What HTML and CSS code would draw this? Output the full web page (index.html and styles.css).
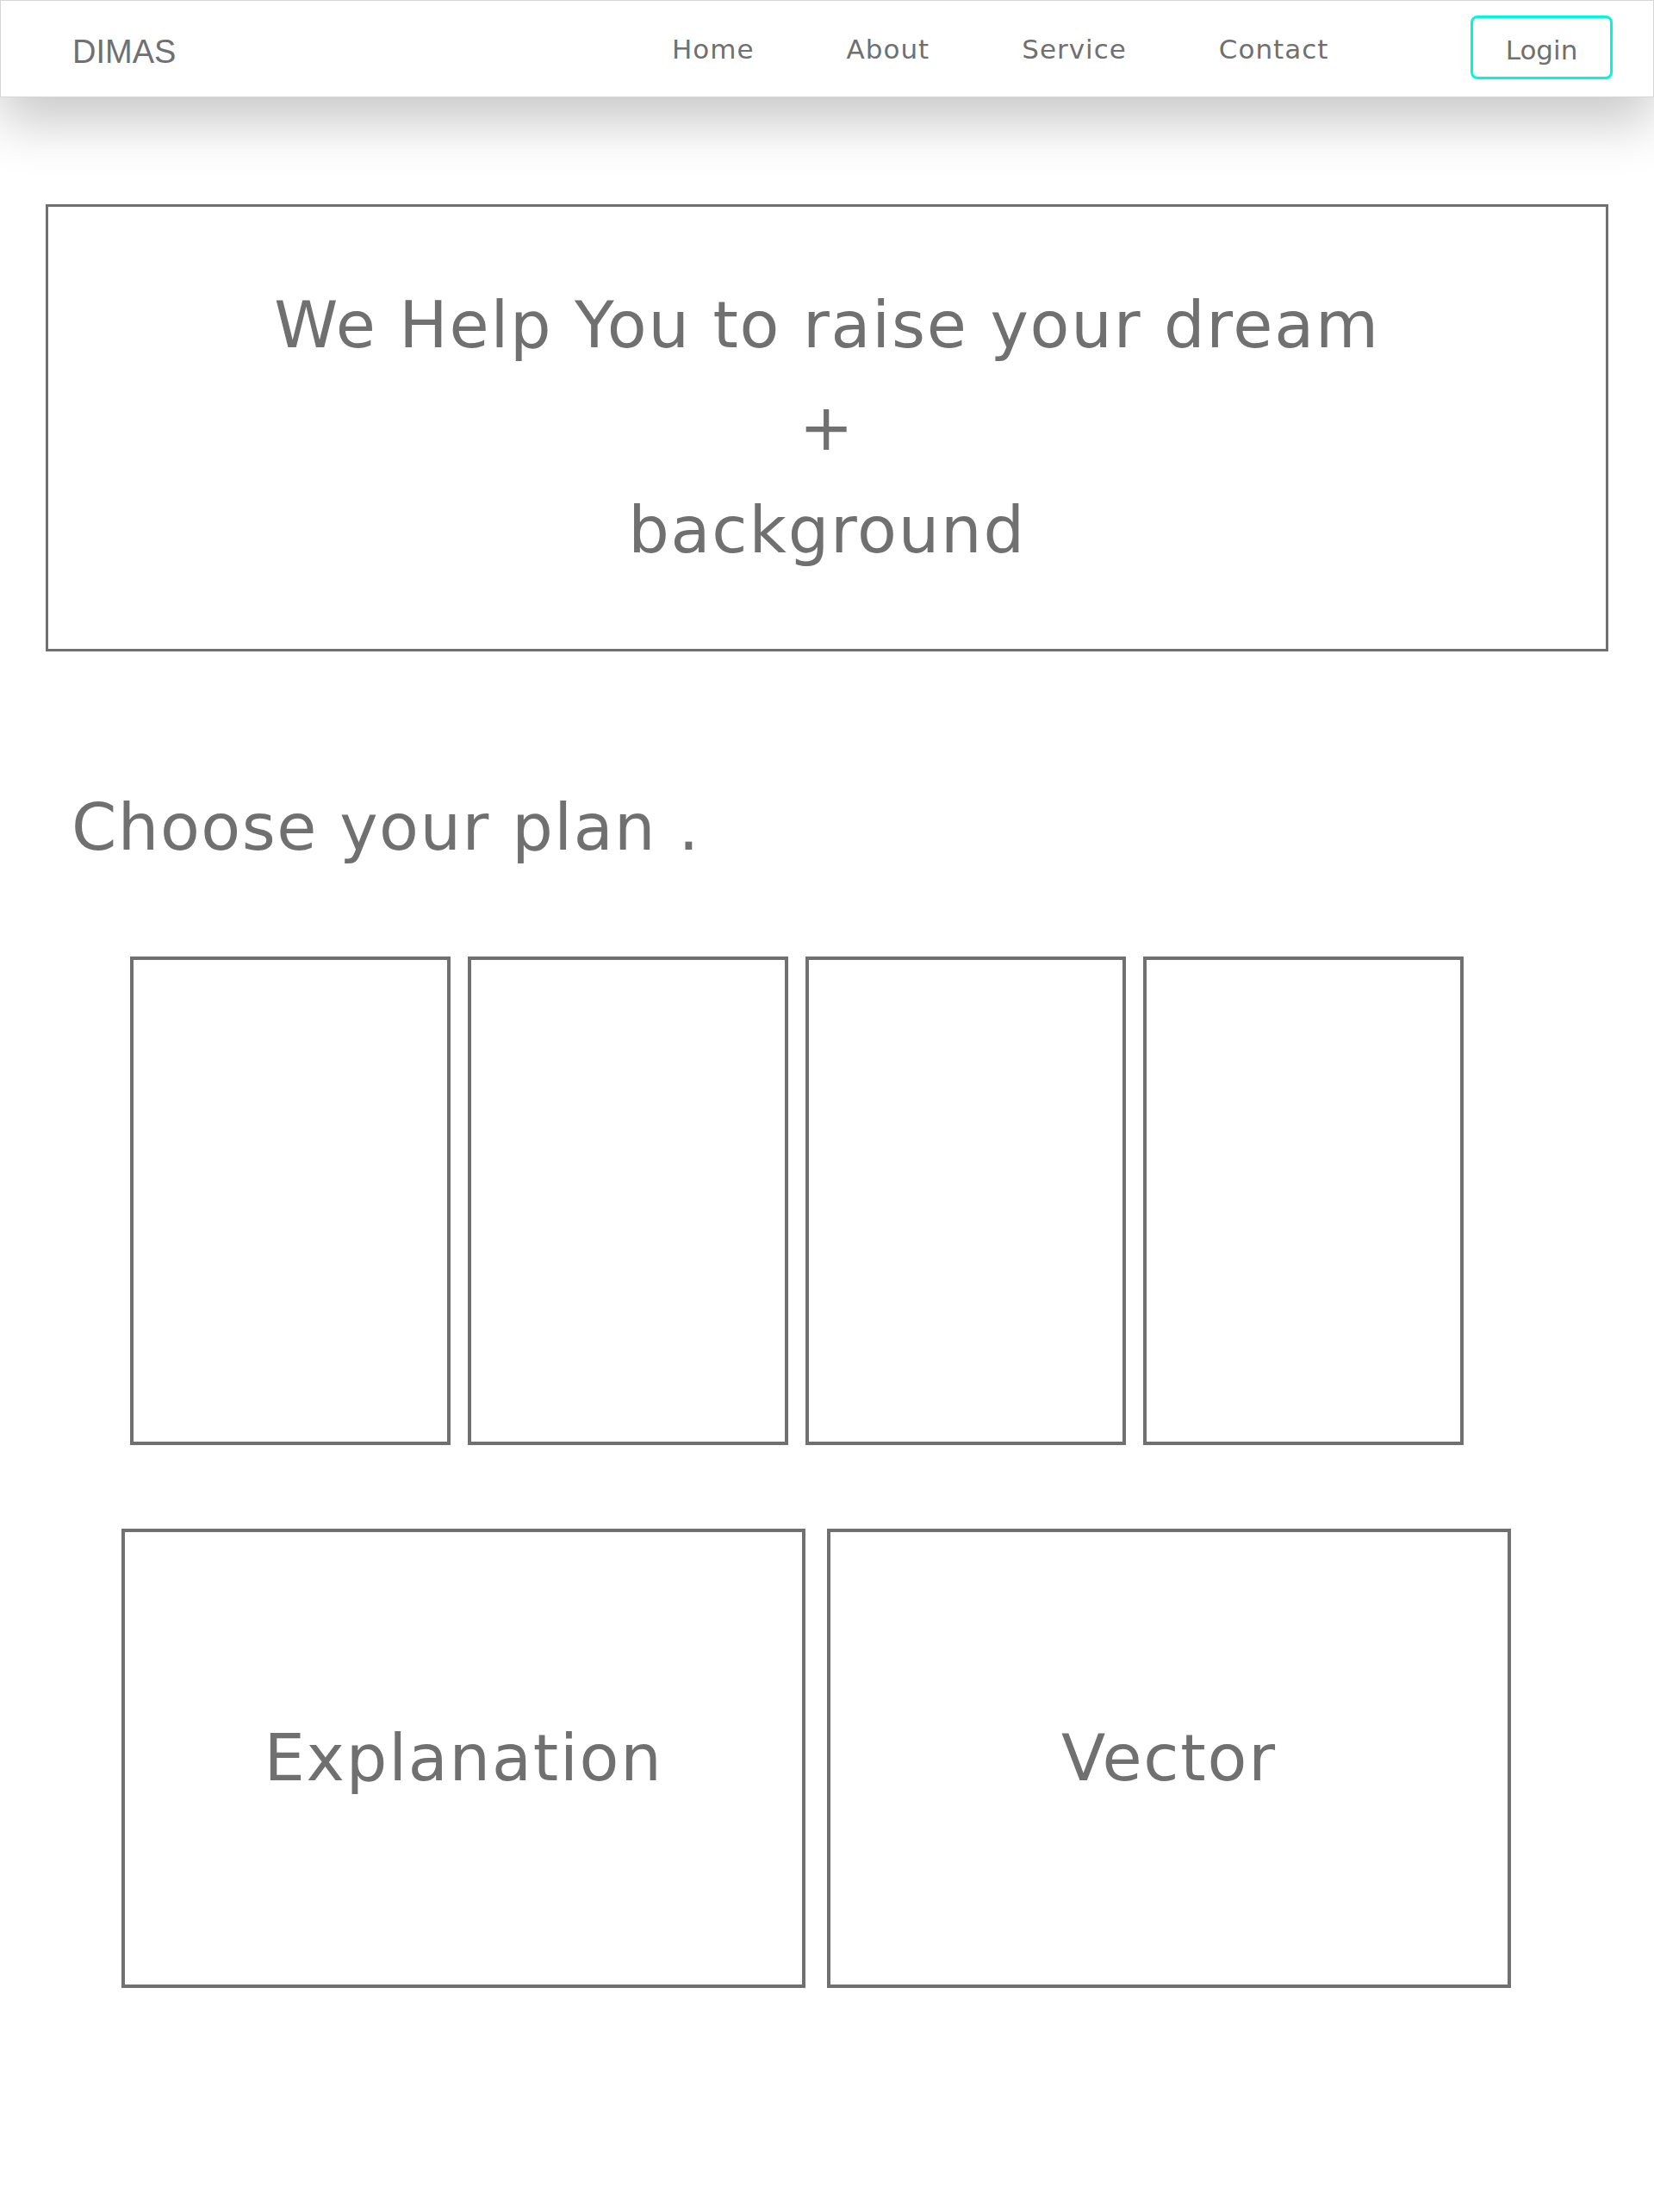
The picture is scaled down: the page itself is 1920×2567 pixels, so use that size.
FILE: index.html
```html
<!DOCTYPE html>
<html lang="en">
<head>
<meta charset="utf-8">
<title>DIMAS</title>
<link rel="stylesheet" href="styles.css">
</head>
<body>
<header class="navbar">
  <div class="brand">DIMAS</div>
  <nav class="nav-links">
    <a class="nav-link" href="#">Home</a>
    <a class="nav-link" href="#">About</a>
    <a class="nav-link" href="#">Service</a>
    <a class="nav-link" href="#">Contact</a>
  </nav>
  <a class="login-btn" href="#">Login</a>
</header>

<main class="page">
  <section class="hero">
    <p class="hero-line">We Help You to raise your dream</p>
    <p class="hero-line">+</p>
    <p class="hero-line">background</p>
  </section>

  <h2 class="section-title">Choose your plan .</h2>

  <section class="plans">
    <div class="plan-card"></div>
    <div class="plan-card"></div>
    <div class="plan-card"></div>
    <div class="plan-card"></div>
  </section>

  <section class="info-row">
    <div class="info-box"><span class="info-text">Explanation</span></div>
    <div class="info-box"><span class="info-text">Vector</span></div>
  </section>
</main>
</body>
</html>
```

FILE: styles.css
```css
* {
  box-sizing: border-box;
}

html, body {
  margin: 0;
  padding: 0;
  background: #ffffff;
}

body {
  font-family: "DejaVu Sans", "Noto Sans", sans-serif;
  color: #707070;
  min-height: 2567px;
}

.navbar {
  display: flex;
  align-items: center;
  width: 1920px;
  height: 113px;
  padding: 0 47px 0 83px;
  border: 1px solid #d6d6d6;
  background: #ffffff;
  box-shadow: 0 30px 60px rgba(0, 0, 0, 0.21);
  position: relative;
  z-index: 2;
}

.brand {
  font-family: "Liberation Sans", Arial, sans-serif;
  font-size: 38px;
  color: #707070;
  margin-top: 8px;
  width: 121px;
}

.nav-links {
  display: flex;
  gap: 107px;
  margin-left: 575px;
}

.nav-link {
  font-size: 31px;
  letter-spacing: 1px;
  color: #707070;
  text-decoration: none;
  line-height: 36px;
}

.login-btn {
  margin-left: auto;
  display: flex;
  align-items: center;
  justify-content: center;
  width: 165px;
  height: 74px;
  margin-top: -3px;
  padding-top: 5px;
  border: 3px solid #00f8d8;
  border-radius: 8px;
  font-size: 31px;
  color: #707070;
  text-decoration: none;
}

.page {
  padding: 0 53px;
}

.hero {
  margin-top: 124px;
  height: 519px;
  border: 3px solid #707070;
  display: flex;
  flex-direction: column;
  justify-content: center;
  align-items: center;
}

.hero-line {
  margin: 0;
  font-size: 75px;
  line-height: 119px;
  letter-spacing: 1.8px;
  text-align: center;
}

.section-title {
  margin: 145px 0 0 30px;
  font-weight: normal;
  font-size: 75px;
  line-height: 119px;
  letter-spacing: 1.5px;
}

.plans {
  display: flex;
  gap: 20px;
  margin: 90px 0 0 98px;
}

.plan-card {
  width: 372px;
  height: 567px;
  border: 4px solid #707070;
}

.info-row {
  display: flex;
  gap: 25px;
  margin: 97px 0 0 88px;
}

.info-box {
  width: 794px;
  height: 533px;
  border: 4px solid #707070;
  display: flex;
  align-items: center;
  justify-content: center;
}

.info-text {
  font-size: 75px;
  line-height: 119px;
  letter-spacing: 1.8px;
}
```
